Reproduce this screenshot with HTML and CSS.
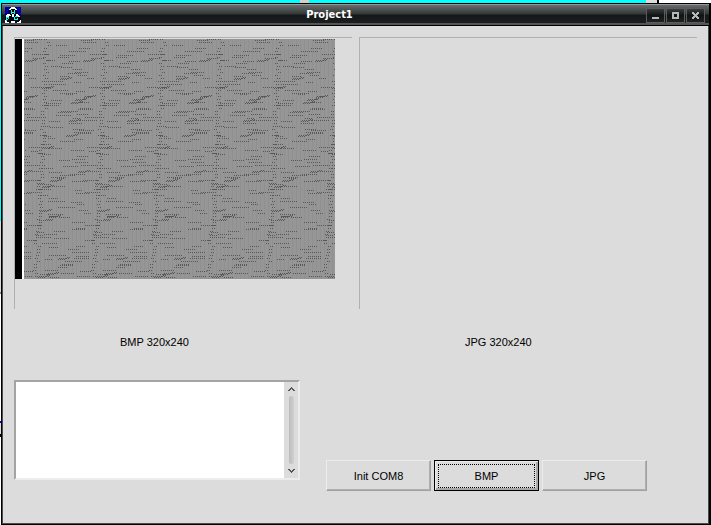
FILE: index.html
```html
<!DOCTYPE html>
<html lang="en">
<head>
<meta charset="utf-8">
<title>Project1</title>
<link rel="stylesheet" href="styles.css">
</head>
<body>
<div class="backdrop"><span class="backdrop-tab"></span><span class="backdrop-edge"></span></div>
<main class="window">
  <header class="titlebar">
    <svg class="app-icon" viewBox="0 0 16 16" width="16" height="16" shape-rendering="crispEdges" aria-hidden="true">
      <path fill="#00008b" d="M0 0h16v16H0z"/>
      <path fill="#0000f0" d="M0 0h2v1H0zM3 1h2v1H3zM1 3h2v1H1zM12 1h3v1h-3zM13 3h2v1h-2zM0 5h2v1H0zM14 6h2v1h-2z"/>
      <path fill="#000" d="M4 3h2v4H4zM5 2h6v5H5zM10 3h2v5h-2zM2 7h5v8H2zM0 10h3v4H0zM9 8h5v7H9zM13 10h3v4h-3zM6 11h4v4H6z"/>
      <path fill="#fff" d="M6 0h4v1h1v1h1v1h-2V2H6v1H4V2h1V1h1zM2 7h3v1h1v1H4v1H1V8h1zM11 7h2v1h1v1h1v1h-3V9h-1zM7 7h2v3H7zM0 13h1v1h1v1h2v1H0zM15 13h1v3h-4v-1h2v-1h1zM6 14h4v2H6z"/>
      <path fill="#0ff" d="M6 3h1v4H6zM9 3h1v4H9zM7 5h2v1H7zM1 10h3v1H1zM1 11h1v3H1zM3 11h1v1H3zM2 12h1v1H2zM10 9h3v1h-3zM9 10h1v3H9zM10 13h3v-2h-1v1h-2z"/>
    </svg>
    <h1 class="title">Project1</h1>
    <div class="window-buttons">
      <button type="button" class="window-button" aria-label="Minimize"><svg viewBox="0 0 9 9" width="9" height="9" shape-rendering="crispEdges"><path fill="#b8b8b8" d="M1 6h7v2H1z"/></svg></button>
      <button type="button" class="window-button" aria-label="Maximize"><svg viewBox="0 0 9 9" width="9" height="9" shape-rendering="crispEdges"><path fill="#b8b8b8" fill-rule="evenodd" d="M1 1h7v7H1zM3 3v3h3V3z"/></svg></button>
      <button type="button" class="window-button" aria-label="Close"><svg viewBox="0 0 9 9" width="9" height="9" shape-rendering="crispEdges"><path fill="#b8b8b8" d="M1 1h2v1h1v1h1V2h1V1h2v2H7v1H6v1h1v1h1v2H6V7H5V6H4v1H3v1H1V6h1V5h1V4H2V3H1z"/></svg></button>
    </div>
  </header>
  <div class="client">
    <div class="pictures">
      <figure class="picture">
        <div class="frame">
          <svg class="bitmap" viewBox="0 0 320 240" width="320" height="240" shape-rendering="crispEdges" role="img" aria-label="Captured bitmap">
            <defs>
              <pattern id="stripes" width="4" height="240" patternUnits="userSpaceOnUse">
                <path fill="#969696" d="M0 0h4v240H0z"/>
                <path fill="#909090" d="M1 0h1v240H1z"/>
              </pattern>
            </defs>
            <path fill="#fff" d="M0 0h320v240H0z"/>
            <path fill="#000" d="M0 0h7v240H0z"/>
            <path fill="url(#stripes)" d="M9 0h311v240H9z"/>
            <path id="dots" fill="#585858"/>
          </svg>
        </div>
        <figcaption class="caption">BMP 320x240</figcaption>
      </figure>
      <figure class="picture">
        <div class="frame"></div>
        <figcaption class="caption">JPG 320x240</figcaption>
      </figure>
    </div>
    <div class="controls">
      <div class="memo">
        <textarea class="memo-text" aria-label="Log"></textarea>
        <div class="scrollbar">
          <button type="button" class="scroll-button" aria-label="Scroll up"><svg viewBox="0 0 7 4" width="7" height="4" shape-rendering="crispEdges"><path fill="#555" d="M3 0h1v1h1v1h1v1h1v1H5V3H4V2H3v1H2v1H0V3h1V2h1V1h1z"/></svg></button>
          <div class="scroll-thumb"></div>
          <button type="button" class="scroll-button" aria-label="Scroll down"><svg viewBox="0 0 7 4" width="7" height="4" shape-rendering="crispEdges"><path fill="#555" d="M0 0h2v1h1v1h1V1h1V0h2v1H6v1H5v1H4v1H3V3H2V2H1V1H0z"/></svg></button>
        </div>
      </div>
      <div class="actions">
        <button type="button" class="button">Init COM8</button>
        <button type="button" class="button button-default"><span class="focus-ring">BMP</span></button>
        <button type="button" class="button">JPG</button>
      </div>
    </div>
  </div>
</main>
<script src="texture.js"></script>
</body>
</html>
```
FILE: styles.css
```css
* {
  box-sizing: border-box;
}

body {
  margin: 0;
  min-height: 100vh;
  display: flex;
  flex-direction: column;
  padding-left: 1px;
  background: linear-gradient(#0ff 221px, #dcdcdc 221px, #dcdcdc 292px, #888 292px, #888 294px, #fff 294px, #fff 421px, #00f 421px, #00f 423px, #ddd 423px, #ddd 434px, #000 434px, #000 437px, #fff 437px);
  font: 11px/16px "Liberation Sans", Arial, sans-serif;
  color: #000;
}

.backdrop {
  display: flex;
  height: 3px;
  background: #0ff;
}

.backdrop-tab {
  width: 9px;
  margin-left: 299px;
  background: #d4d0c8;
}

.backdrop-edge {
  width: 65px;
  margin-left: auto;
  background: linear-gradient(90deg, #dcdcdc 11px, #000 11px, #000 13px, #fff 13px);
}

.window {
  flex: 1;
  display: flex;
  flex-direction: column;
  border: 1px solid #000;
  border-right-width: 2px;
  background: #dcdcdc;
}

.titlebar {
  display: flex;
  align-items: center;
  height: 22px;
  padding: 0 4px 0 3px;
  border-top: 1px solid #999;
  border-bottom: 1px solid #000;
  background: linear-gradient(#686b6b, #343737 45%, #151818 50%, #1b1e1e 90%, #555 90%);
}

.title {
  flex: 1;
  margin: 0;
  padding-right: 8px;
  text-align: center;
  font: bold 11px/16px "DejaVu Sans Condensed", "DejaVu Sans", sans-serif;
  color: #fff;
}

.window-buttons {
  display: flex;
  gap: 1px;
}

.window-button {
  display: flex;
  align-items: center;
  justify-content: center;
  width: 19px;
  height: 15px;
  padding: 0;
  border: 1px solid #5c5c5c;
  background: linear-gradient(#3a3d3d, #111414 50%, #202323);
}

.client {
  flex: 1;
  padding: 11px;
  border: 1px solid #4a4d50;
  border-top: 0;
}

.pictures {
  display: grid;
  grid-template-columns: 1fr 1fr;
  gap: 7px;
}

.picture {
  margin: 0;
}

.frame {
  height: 272px;
  padding-top: 1px;
  border-top: 1px solid #b0b0b0;
  border-left: 1px solid #b0b0b0;
}

.bitmap {
  display: block;
}

.caption {
  margin-top: 25px;
  padding-left: 106px;
}

.controls {
  display: flex;
  align-items: flex-start;
  gap: 26px;
  margin-top: 30px;
}

.memo {
  display: flex;
  width: 286px;
  height: 100px;
  border: 2px solid;
  border-color: #a4a4a4 #ececec #ececec #a4a4a4;
}

.memo-text {
  flex: 1;
  min-width: 0;
  padding: 2px;
  border: 0;
  outline: 0;
  resize: none;
  overflow: hidden;
  background: #fff;
  font: inherit;
}

.scrollbar {
  display: flex;
  flex-direction: column;
  align-items: center;
  width: 14px;
}

.scroll-button {
  display: flex;
  align-items: center;
  justify-content: center;
  width: 14px;
  height: 14px;
  padding: 0;
  border: 0;
  background: none;
}

.scroll-thumb {
  flex: 1;
  width: 5px;
  border-radius: 2px;
  background: linear-gradient(90deg, #bcbcbc, #d0d0d0);
}

.actions {
  display: flex;
  gap: 3px;
  padding-top: 80px;
}

.button {
  width: 105px;
  height: 31px;
  padding: 1px;
  border: 1px solid;
  border-color: #ececec #a0a0a0 #a0a0a0 #ececec;
  box-shadow: inset -1px -1px #b0b0b0;
  background: #dcdcdc;
  font: inherit;
  color: inherit;
}

.button-default {
  padding: 2px;
  border: 1px solid #000;
  box-shadow: inset 1px 1px #ececec, inset -2px -2px #a8a8a8;
}

.focus-ring {
  display: block;
  margin: 0 1px;
  padding: 3px 0;
  border: 1px dotted #000;
}
```
FILE: texture.js
```js
// Fills the bitmap with short dashed runs that repeat in drifting columns.
const PERIOD = 58;
const LEFT = 9;
const RIGHT = 320;
const HEIGHT = 240;

let seed = 7;
function random() {
  seed = (seed * 16807) % 2147483647;
  return seed / 2147483647;
}

const points = new Set();
function run(x, y, count, slope) {
  for (let i = 0; i < count; i++) {
    const row = y + Math.round(i * slope);
    for (let px = x + i * 2 - PERIOD; px < RIGHT; px += PERIOD) {
      if (px >= LEFT && row < HEIGHT && row >= 0) points.add(px + "," + row);
    }
  }
}

for (let y = 0; y < HEIGHT; y += 3) {
  const drift = Math.round(y / 20);
  const base = LEFT + 20 - drift;
  run(base + Math.floor(random() * 5), y, 2, 0);
  run(base + Math.floor(random() * 52), y, 4 + Math.floor(random() * 6), 0);
  if (random() < 0.6) {
    run(base + Math.floor(random() * 52), y + 1, 4 + Math.floor(random() * 5), 0);
  }
  if (random() < 0.22) {
    const x = base + Math.floor(random() * 45);
    run(x + 1, y, 6, -0.15);
    run(x, y + 1, 6, -0.15);
  }
}

document.getElementById("dots").setAttribute(
  "d",
  [...points].map((p) => "M" + p + "h1v1h-1z").join("")
);
```
